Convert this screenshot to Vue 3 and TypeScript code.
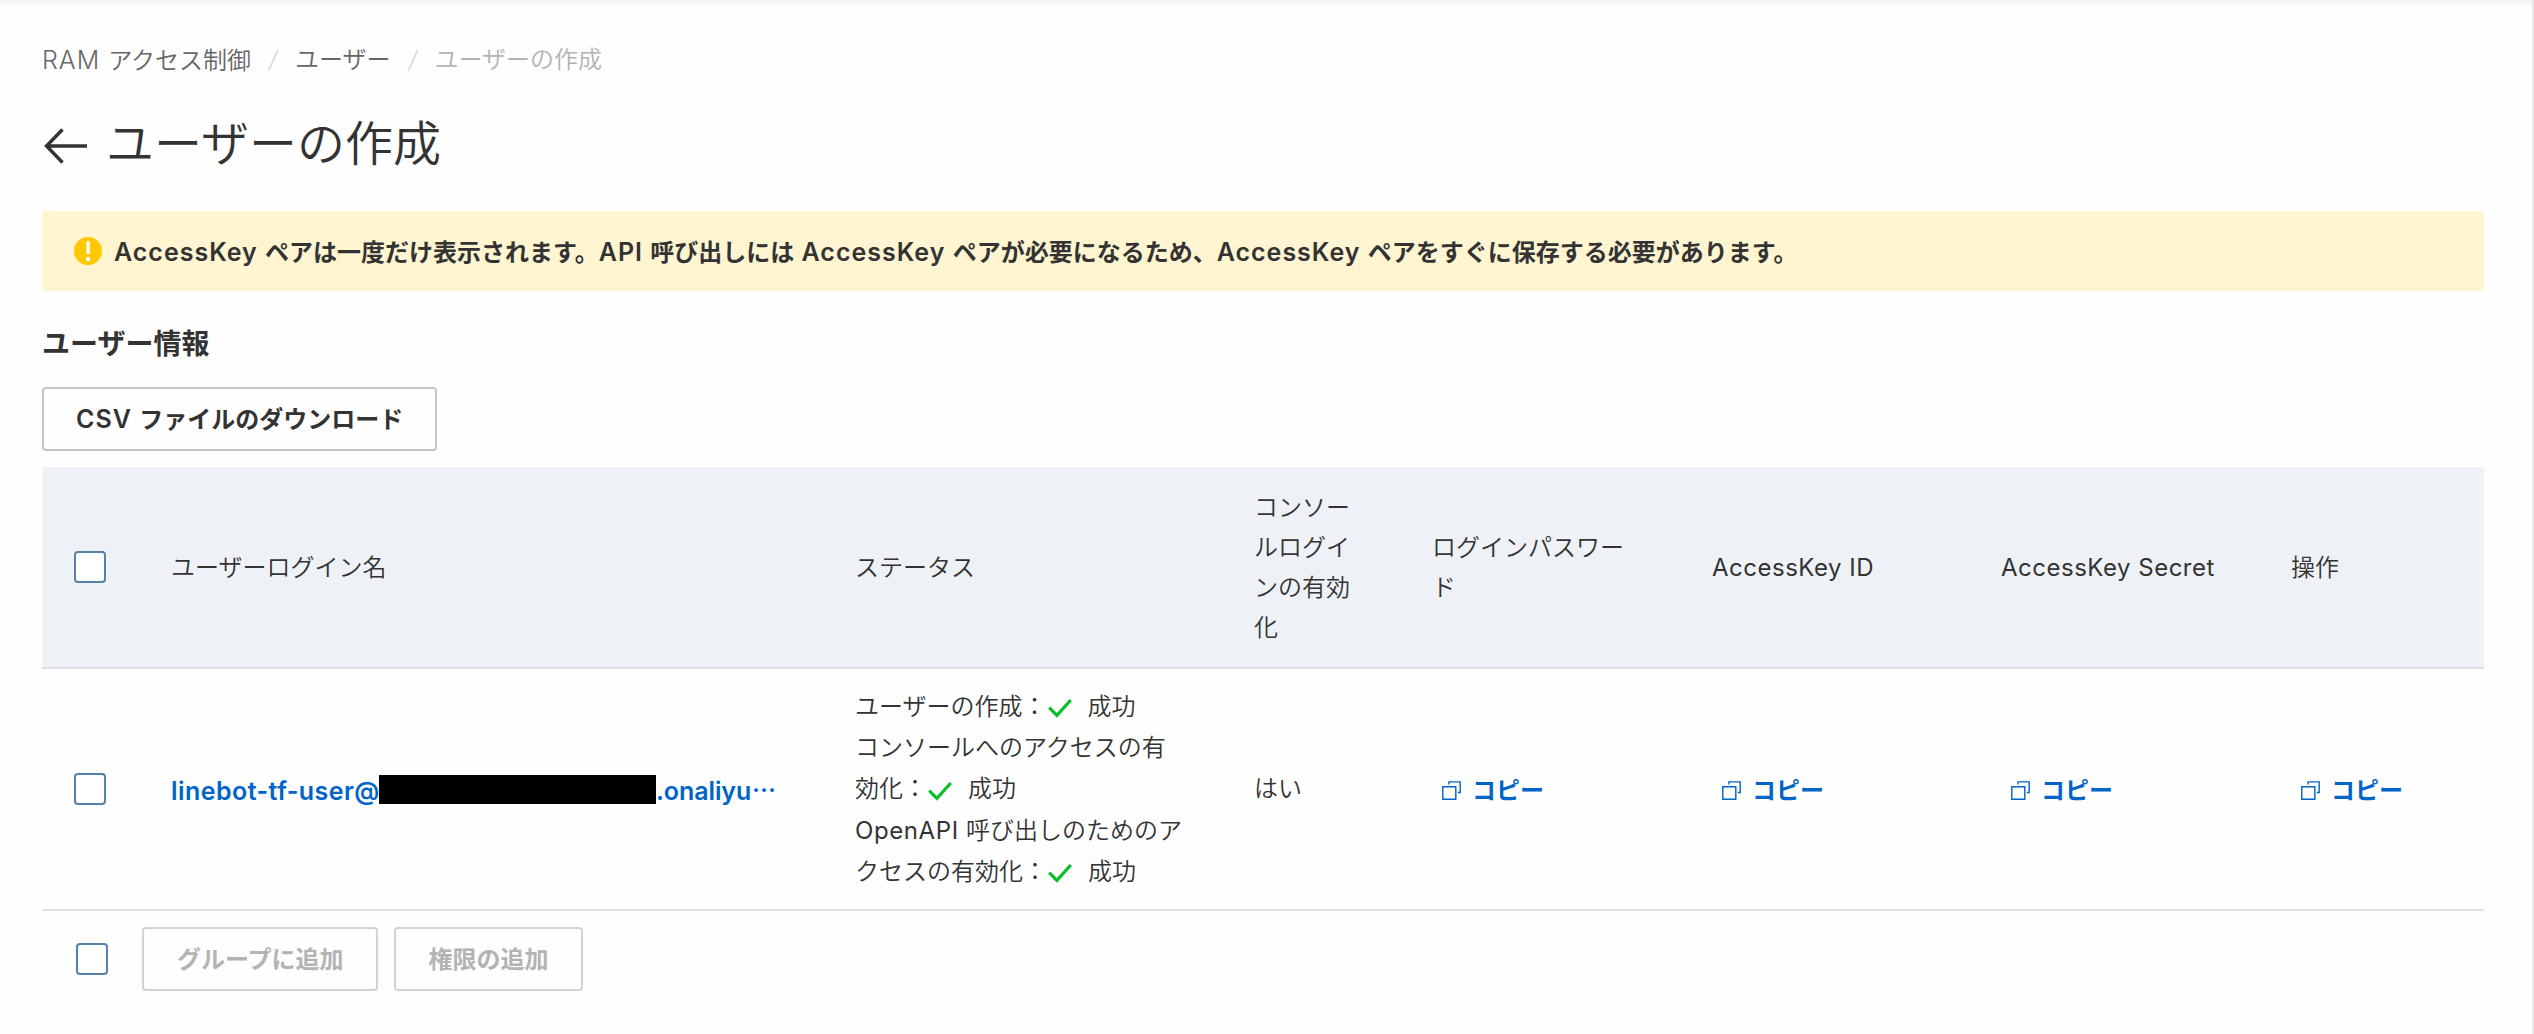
<script setup lang="ts">
interface Column {
  key: string
  width: number
  lines: string[]
  latin?: boolean
}

interface StatusLine {
  latin?: string
  text: string
  done?: boolean
}

const columns: Column[] = [
  { key: 'login', width: 684, lines: ['ユーザーログイン名'] },
  { key: 'status', width: 399, lines: ['ステータス'] },
  { key: 'console', width: 178, lines: ['コンソー', 'ルログイ', 'ンの有効', '化'] },
  { key: 'password', width: 280, lines: ['ログインパスワー', 'ド'] },
  { key: 'keyId', width: 289, lines: ['AccessKey ID'], latin: true },
  { key: 'keySecret', width: 290, lines: ['AccessKey Secret'], latin: true },
  { key: 'actions', width: 225, lines: ['操作'] },
]

const statuses: StatusLine[] = [
  { text: 'ユーザーの作成：', done: true },
  { text: 'コンソールへのアクセスの有' },
  { text: '効化：', done: true },
  { latin: 'OpenAPI ', text: '呼び出しのためのア' },
  { text: 'クセスの有効化：', done: true },
]

const copyCells: string[] = ['password', 'keyId', 'keySecret', 'actions']
const batchActions: string[] = ['グループに追加', '権限の追加']
</script>

<template>
  <div class="page">
    <nav class="breadcrumb">
      <a><b>RAM </b>アクセス制御</a>
      <i>/</i>
      <a>ユーザー</a>
      <i>/</i>
      <span class="current">ユーザーの作成</span>
    </nav>

    <header class="title">
      <svg class="back" width="44" height="36" viewBox="0 0 44 36">
        <path d="M18.5 1.5 2.5 18l16 16.5M2.5 18H43" fill="none" stroke="#333" stroke-width="3.4" />
      </svg>
      <h1>ユーザーの作成</h1>
    </header>

    <div class="notice">
      <svg width="28" height="28" viewBox="0 0 28 28">
        <circle cx="14" cy="14" r="14" fill="#ffc800" />
        <rect x="12.4" y="4" width="3.4" height="13" rx="0.8" fill="#fff" />
        <circle cx="14.1" cy="22" r="2.2" fill="#fff" />
      </svg>
      <p>
        <b>AccessKey </b>ペアは一度だけ表示されます。<b>API </b>呼び出しには<b> AccessKey </b>ペアが必要になるため、<b>AccessKey </b>ペアをすぐに保存する必要があります。
      </p>
    </div>

    <h2>ユーザー情報</h2>
    <button class="btn download"><b>CSV </b>ファイルのダウンロード</button>

    <table>
      <colgroup>
        <col style="width: 97px" />
        <col v-for="c in columns" :key="c.key" :style="{ width: c.width + 'px' }" />
      </colgroup>
      <thead>
        <tr>
          <th class="select"><span class="check"></span></th>
          <th v-for="c in columns" :key="c.key" :class="{ latin: c.latin }">
            <div v-for="line in c.lines" :key="line">{{ line }}</div>
          </th>
        </tr>
      </thead>
      <tbody>
        <tr>
          <td><span class="check"></span></td>
          <td>
            <a class="user"><span class="name">linebot-tf-user@</span><span class="mask"></span><span class="domain">.onaliyu</span><span>⋯</span></a>
          </td>
          <td class="status">
            <div v-for="s in statuses" :key="s.text">
              <b v-if="s.latin">{{ s.latin }}</b>
              <span>{{ s.text }}</span>
              <template v-if="s.done">
                <svg width="24" height="20" viewBox="0 0 24 20">
                  <path d="M1.2 9.6 8.9 17.4 22.8 2" fill="none" stroke="#0abf2c" stroke-width="3.2" />
                </svg>
                <span>成功</span>
              </template>
            </div>
          </td>
          <td>はい</td>
          <td v-for="key in copyCells" :key="key">
            <a class="copy">
              <svg width="19" height="19" viewBox="0 0 19 19" fill="none" stroke="#0064c8" stroke-width="1.4">
                <path d="M.8 5.8h13v12.4H.8zM7 3.6V.9h11.2v10.6h-2.4" />
              </svg>
              <span>コピー</span>
            </a>
          </td>
        </tr>
      </tbody>
    </table>

    <footer class="batch">
      <span class="check"></span>
      <button v-for="a in batchActions" :key="a" class="btn disabled">{{ a }}</button>
    </footer>
  </div>
</template>

<style>
body {
  background: #fefefe;
}
</style>

<style scoped>
.page {
  box-sizing: border-box;
  width: 2534px;
  height: 1034px;
  padding: 40px 48px 0 42px;
  border-right: 2px solid #e8e8e8;
  background: linear-gradient(#f3f3f3, #fefefe 7px);
  color: #333;
  font: 400 24px/40px Inter, 'Noto Sans CJK JP', sans-serif;
  overflow: hidden;
}
b {
  font-size: 25px;
  font-weight: inherit;
  letter-spacing: 1px;
  white-space: pre;
}
.breadcrumb {
  display: flex;
  height: 40px;
  color: #666;
  font-weight: 350;
  white-space: pre;
}
.breadcrumb i {
  width: 44px;
  color: #d4d4d4;
  text-align: center;
}
.breadcrumb .current {
  color: #b3b3b3;
}
.title {
  display: flex;
  align-items: center;
  height: 72px;
  margin-top: 28px;
}
.back {
  margin: 4px 18px 0 2px;
}
h1 {
  margin: 0;
  font-size: 48px;
  font-weight: 350;
  line-height: 72px;
}
.notice {
  display: flex;
  align-items: center;
  height: 80px;
  margin-top: 31px;
  padding-left: 32px;
  border-radius: 4px;
  background: #fff5d1;
}
.notice p {
  margin: 0 0 0 12px;
  padding-top: 2px;
  font-weight: 600;
  white-space: nowrap;
}
h2 {
  height: 40px;
  margin: 33px 0 23px;
  font-size: 28px;
  font-weight: 600;
  line-height: 40px;
}
.btn {
  box-sizing: border-box;
  height: 64px;
  padding: 1px 32px 0;
  border: 2px solid #c0c6cc;
  border-radius: 4px;
  background: transparent;
  color: #333;
  font: inherit;
  font-weight: 600;
  white-space: nowrap;
}
.download {
  display: block;
  width: 395px;
}
table {
  width: 2442px;
  margin-top: 16px;
  border-collapse: separate;
  border-spacing: 0;
  table-layout: fixed;
}
th,
td {
  box-sizing: border-box;
  padding: 0 31px 0 32px;
  border-bottom: 2px solid #dfe2e4;
  font-weight: 350;
  text-align: left;
  vertical-align: middle;
  white-space: nowrap;
}
th {
  height: 202px;
  padding-top: 2px;
  background: #eef2f7;
}
.select {
  padding-top: 0;
}
.latin {
  font-weight: 400;
  letter-spacing: 0.5px;
}
td {
  height: 242px;
}
.check {
  display: block;
  box-sizing: border-box;
  width: 32px;
  height: 32px;
  border: 2px solid #5580a8;
  border-radius: 4px;
  background: #fff;
}
.user {
  display: flex;
  align-items: center;
  color: #0064c8;
  font-weight: 600;
}
.user span:not(.mask) {
  padding-top: 3px;
}
.user .name {
  width: 208px;
  font-size: 25px;
  letter-spacing: 0.45px;
}
.mask {
  width: 277px;
  height: 29px;
  background: #000;
}
.user .domain {
  width: 96px;
  font-size: 25px;
  letter-spacing: -0.1px;
}
.status {
  line-height: 41.25px;
}
.status div {
  display: flex;
  align-items: center;
  height: 41.25px;
}
.status b {
  font-size: 24px;
  font-weight: 400;
  letter-spacing: 0.6px;
}
.status svg {
  margin: 3px 16px 0 1px;
}
.copy {
  display: flex;
  align-items: center;
  color: #0064c8;
  font-weight: 600;
}
.copy svg {
  margin: 2px 11px 0 10px;
}
.copy span {
  padding-top: 3px;
}
.batch {
  display: flex;
  align-items: center;
  gap: 16px;
  height: 64px;
  margin: 16px 0 0 34px;
}
.batch .check {
  margin-right: 18px;
}
.disabled {
  padding: 1px 32px 0 33px;
  border-color: #d0d4d8;
  color: #b3b3b3;
}
</style>
